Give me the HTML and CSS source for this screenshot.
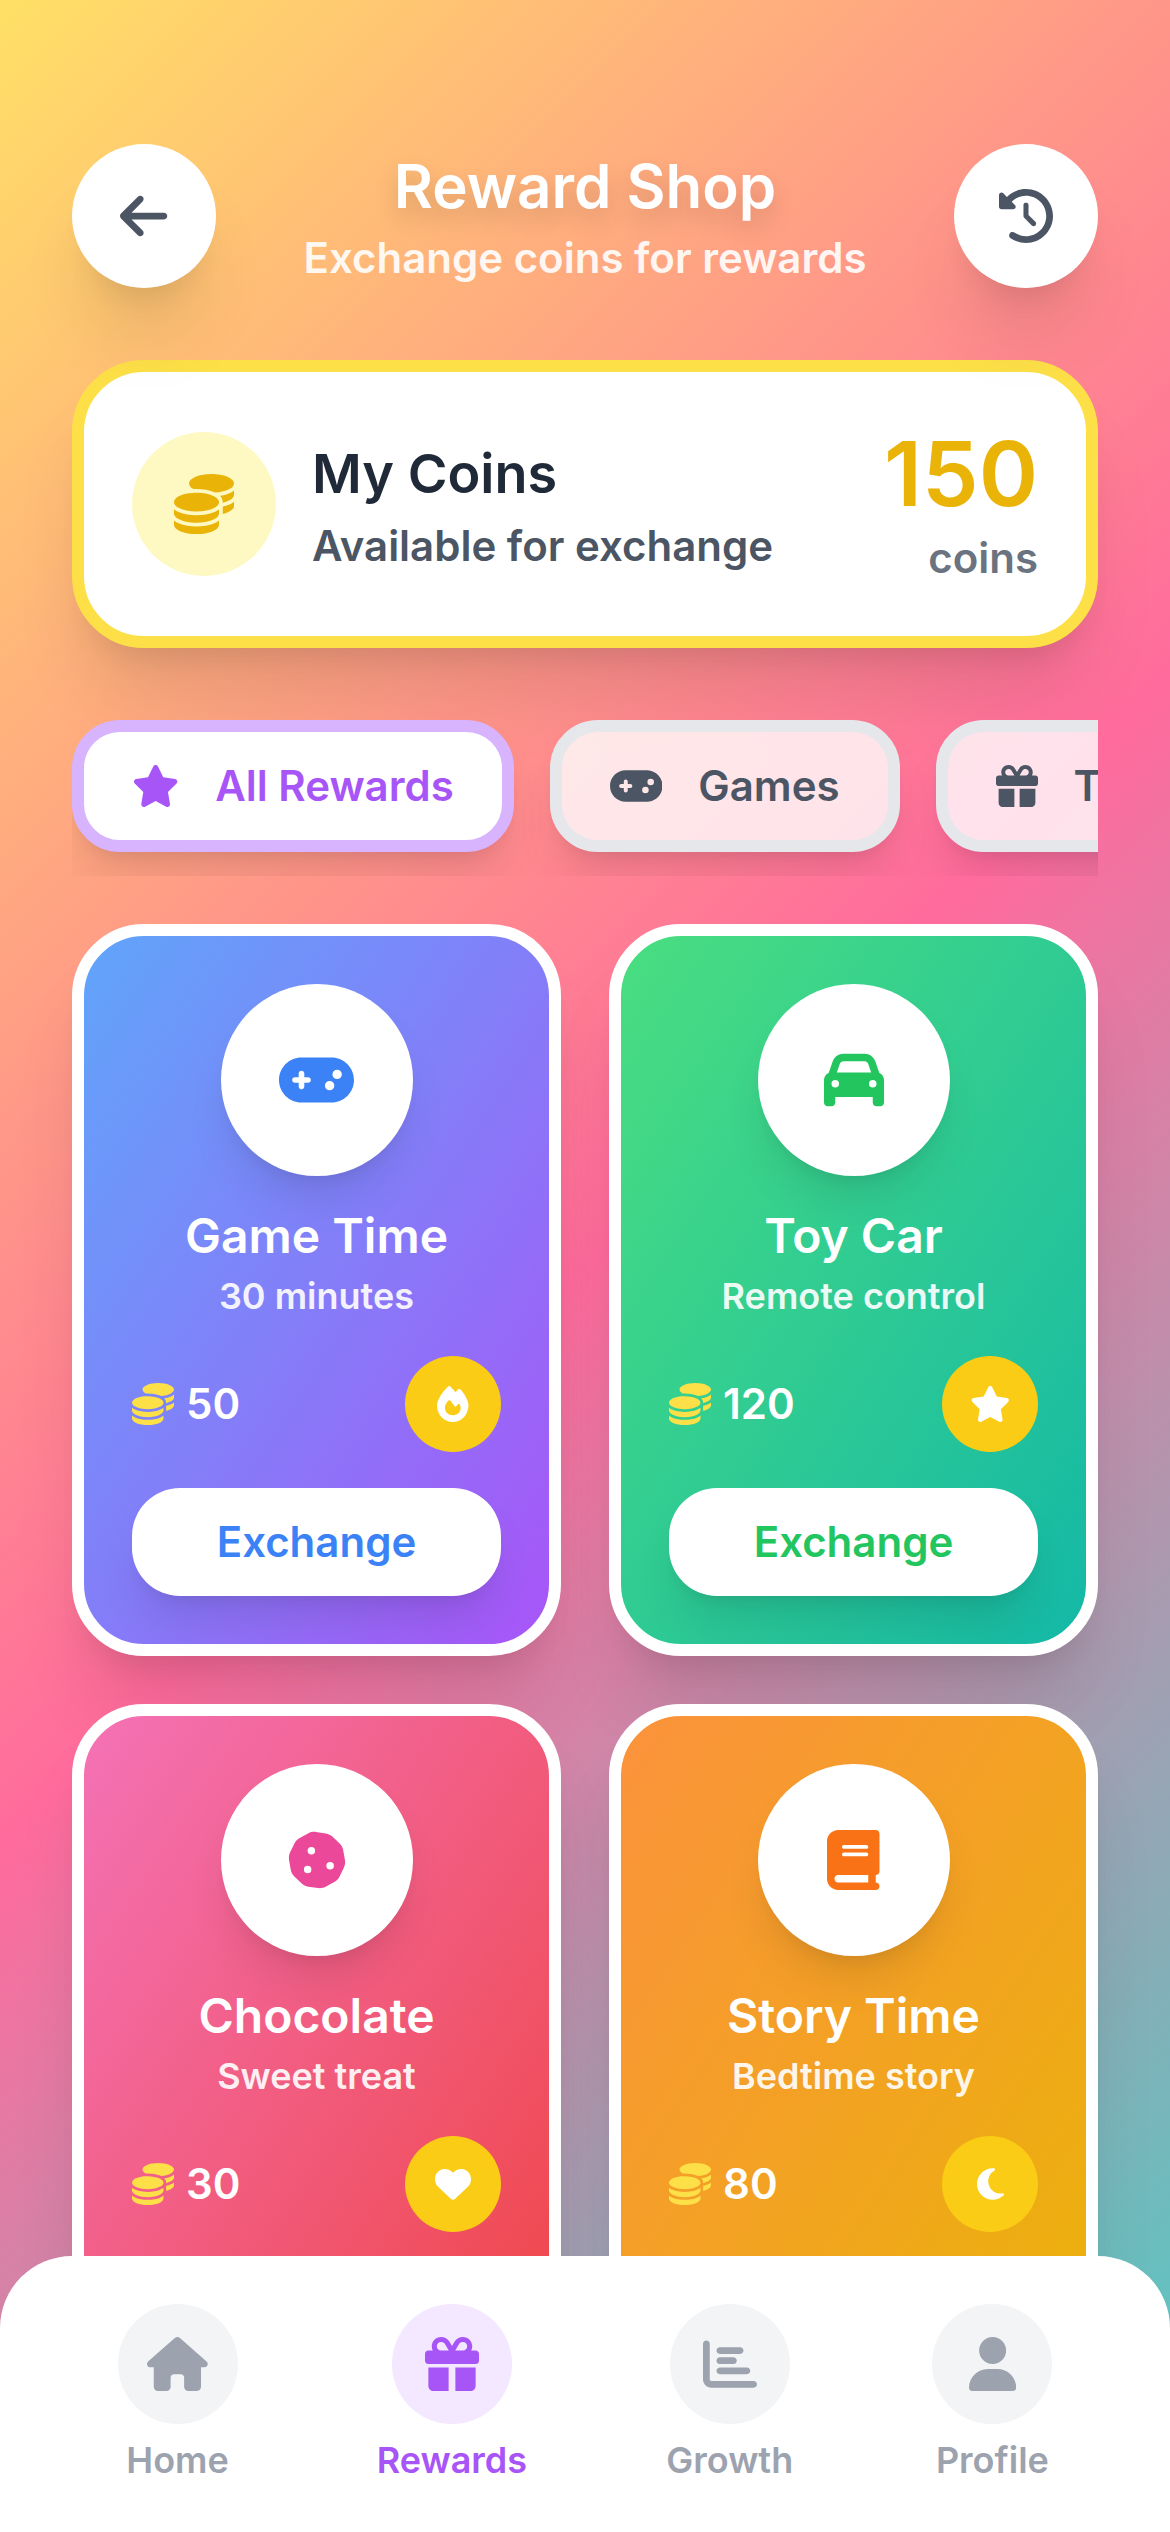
FILE: index.html
```html
<!DOCTYPE html>
<html lang="en">
<head>
<meta charset="utf-8">
<meta name="viewport" content="width=device-width, initial-scale=1">
<title>Reward Shop</title>
<link rel="stylesheet" href="styles.css">
</head>
<body>
<svg class="sprite" aria-hidden="true">
  <symbol id="coins" viewBox="0 0 512 512"><path d="M512 80c0 18-14.3 34.6-38.4 48c-29.1 16.1-72.5 27.5-122.3 30.9c-3.7-1.8-7.4-3.5-11.3-5C300.6 137.4 248.2 128 192 128c-8.3 0-16.4 .2-24.5 .6l-1.1-.6C142.3 114.6 128 98 128 80c0-44.2 86-80 192-80S512 35.8 512 80zM160.7 161.1c10.2-.7 20.7-1.1 31.3-1.1c62.2 0 117.4 12.3 152.5 31.4C369.3 204.9 384 221.7 384 240c0 4-.7 7.9-2.1 11.7c-4.6 13.2-17 25.3-35 35.5l-1.3 .7c-35 19.4-90.8 32-153.6 32c-59.6 0-112.9-11.3-148.2-29.1c-1.9-.9-3.7-1.9-5.5-2.9C14.3 274.6 0 258 0 240c0-34.8 53.4-64.5 128-75.4c10.5-1.5 21.4-2.7 32.7-3.5zM416 240c0-21.9-10.6-39.9-24.1-53.4c28.3-4.4 54.2-11.4 76.2-20.5c16.3-6.8 31.5-15.2 43.9-25.5l0 35.4c0 19.3-16.5 37.1-43.8 50.9c-14.6 7.4-32.4 13.7-52.4 18.5c.1-1.8 .2-3.5 .2-5.3zm-32 96c0 18-14.3 34.6-38.4 48c-1.8 1-3.6 1.9-5.5 2.9C304.9 404.7 251.6 416 192 416c-62.8 0-118.6-12.6-153.6-32C14.3 370.6 0 354 0 336l0-35.4c12.5 10.3 27.6 18.7 43.9 25.5C83.4 342.6 135.8 352 192 352s108.6-9.4 148.1-25.9c7.8-3.2 15.3-6.9 22.4-10.9c6.1-3.4 11.8-7.2 17.2-11.2c1.5-1.1 2.9-2.3 4.3-3.4l0 3.4 0 5.7 0 26.3zm32 0l0-32 0-25.9c19-4.2 36.5-9.5 52.1-16c16.3-6.8 31.5-15.2 43.9-25.5l0 35.4c0 10.5-5 21-14.9 30.9c-16.3 16.3-45 29.7-81.3 38.4c.1-1.7 .2-3.5 .2-5.3zM192 448c56.2 0 108.6-9.4 148.1-25.9c16.3-6.8 31.5-15.2 43.9-25.5l0 35.4c0 44.2-86 80-192 80S0 476.2 0 432l0-35.4c12.5 10.3 27.6 18.7 43.9 25.5C83.4 438.6 135.8 448 192 448z"/></symbol>
  <symbol id="star" viewBox="0 0 576 512"><path d="M316.9 18C311.6 7 300.4 0 288.1 0s-23.4 7-28.8 18L195 150.3 51.4 171.5c-12 1.8-22 10.2-25.7 21.7s-.7 24.2 7.9 32.7L137.8 329 113.2 474.7c-2 12 3 24.2 12.9 31.3s23 8 33.8 2.3l128.3-68.5 128.3 68.5c10.8 5.7 23.9 4.9 33.8-2.3s14.9-19.3 12.9-31.3L438.5 329 542.7 225.9c8.6-8.5 11.7-21.2 7.9-32.7s-13.7-19.9-25.7-21.7L381.2 150.3 316.9 18z"/></symbol>
  <symbol id="gamepad" viewBox="0 0 640 512"><path d="M192 64C86 64 0 150 0 256S86 448 192 448l256 0c106 0 192-86 192-192s-86-192-192-192L192 64zM496 168a40 40 0 1 1 0 80 40 40 0 1 1 0-80zM392 304a40 40 0 1 1 80 0 40 40 0 1 1 -80 0zM168 200c0-13.3 10.7-24 24-24s24 10.7 24 24l0 32 32 0c13.3 0 24 10.7 24 24s-10.7 24-24 24l-32 0 0 32c0 13.3-10.7 24-24 24s-24-10.7-24-24l0-32-32 0c-13.3 0-24-10.7-24-24s10.7-24 24-24l32 0 0-32z"/></symbol>
  <symbol id="gift" viewBox="0 0 512 512"><path d="M190.5 68.8L225.3 128l-1.3 0-72 0c-22.1 0-40-17.9-40-40s17.9-40 40-40l2.2 0c14.9 0 28.8 7.9 36.3 20.8zM64 88c0 14.4 3.5 28 9.6 40L32 128c-17.7 0-32 14.3-32 32l0 64c0 17.7 14.3 32 32 32l448 0c17.7 0 32-14.3 32-32l0-64c0-17.7-14.3-32-32-32l-41.6 0c6.1-12 9.6-25.6 9.6-40c0-48.6-39.4-88-88-88l-2.2 0c-31.9 0-61.5 16.9-77.7 44.4L256 85.5l-24.1-41C215.7 16.9 186.1 0 154.2 0L152 0C103.4 0 64 39.4 64 88zm336 0c0 22.1-17.9 40-40 40l-72 0-1.3 0 34.8-59.2C329.1 55.9 342.9 48 357.8 48l2.2 0c22.1 0 40 17.9 40 40zM32 288l0 176c0 26.5 21.5 48 48 48l144 0 0-224L32 288zM288 512l144 0c26.5 0 48-21.5 48-48l0-176-192 0 0 224z"/></symbol>
</svg>

<div class="app">
  <main class="screen">
    <header class="header">
      <button class="round-button" type="button" aria-label="Back">
        <svg class="icon icon-54" viewBox="0 0 448 512"><path d="M9.4 233.4c-12.5 12.5-12.5 32.8 0 45.3l160 160c12.5 12.5 32.8 12.5 45.3 0s12.5-32.8 0-45.3L109.2 288 416 288c17.7 0 32-14.3 32-32s-14.3-32-32-32l-306.7 0L214.6 118.6c12.5-12.5 12.5-32.8 0-45.3s-32.8-12.5-45.3 0l-160 160z"/></svg>
      </button>
      <div class="heading">
        <h1 class="heading-title">Reward Shop</h1>
        <p class="heading-subtitle">Exchange coins for rewards</p>
      </div>
      <button class="round-button" type="button" aria-label="History">
        <svg class="icon icon-54" viewBox="0 0 512 512"><path d="M75 75L41 41C25.9 25.9 0 36.6 0 57.9L0 168c0 13.3 10.7 24 24 24l110.1 0c21.4 0 32.1-25.9 17-41l-30.8-30.8C155 85.5 203 64 256 64c106 0 192 86 192 192s-86 192-192 192c-40.8 0-78.6-12.7-109.7-34.4c-14.5-10.1-34.4-6.6-44.6 7.9s-6.6 34.4 7.9 44.6C151.2 495 201.7 512 256 512c141.4 0 256-114.6 256-256S397.4 0 256 0C185.3 0 121.3 28.7 75 75zm181 53c-13.3 0-24 10.7-24 24l0 104c0 6.4 2.5 12.5 7 17l72 72c9.4 9.4 24.6 9.4 33.9 0s9.4-24.6 0-33.9l-65-65 0-94.1c0-13.3-10.7-24-24-24z"/></svg>
      </button>
    </header>

    <section class="balance">
      <span class="balance-icon"><svg class="icon icon-60" viewBox="0 0 512 512"><use href="#coins"/></svg></span>
      <div class="balance-text">
        <h2 class="balance-title">My Coins</h2>
        <p class="balance-note">Available for exchange</p>
      </div>
      <div class="balance-amount">
        <p class="balance-number">150</p>
        <p class="balance-unit">coins</p>
      </div>
    </section>

    <div class="tabs">
      <button class="tab tab-active" type="button"><svg class="icon icon-42" viewBox="0 0 576 512"><use href="#star"/></svg>All Rewards</button>
      <button class="tab" type="button"><svg class="icon icon-42" viewBox="0 0 640 512"><use href="#gamepad"/></svg>Games</button>
      <button class="tab" type="button"><svg class="icon icon-42" viewBox="0 0 512 512"><use href="#gift"/></svg>Toys</button>
    </div>

    <section class="rewards">
      <article class="card card-game">
        <span class="card-icon"><svg class="icon icon-60" viewBox="0 0 640 512"><use href="#gamepad"/></svg></span>
        <h3 class="card-title">Game Time</h3>
        <p class="card-note">30 minutes</p>
        <div class="card-row">
          <span class="price"><svg class="icon icon-42" viewBox="0 0 512 512"><use href="#coins"/></svg><span class="price-value">50</span></span>
          <span class="badge"><svg class="icon icon-36" viewBox="0 0 448 512"><path d="M159.3 5.4c7.8-7.3 19.9-7.2 27.7 .1c27.6 25.9 53.5 53.8 77.7 84c11-14.4 23.5-30.1 37-42.9c7.9-7.4 20.1-7.4 28 .1c34.6 33 63.9 76.6 84.5 118c20.3 40.8 33.8 82.5 33.8 111.9C448 404.2 348.2 512 224 512C98.4 512 0 404.1 0 276.5c0-38.4 17.8-85.3 45.4-131.7C73.3 97.7 112.7 48.6 159.3 5.4zM225.7 416c25.3 0 47.7-7 68.8-21c42.1-29.4 53.4-88.2 28.1-134.4c-4.5-9-16-9.6-22.5-2l-25.2 29.3c-6.6 7.6-18.5 7.4-24.7-.5c-16.5-21-46-58.5-62.8-79.8c-6.3-8-18.3-8.1-24.7-.1c-33.8 42.5-50.8 69.3-50.8 99.4C112 375.4 162.6 416 225.7 416z"/></svg></span>
        </div>
        <button class="exchange" type="button">Exchange</button>
      </article>

      <article class="card card-car">
        <span class="card-icon"><svg class="icon icon-60" viewBox="0 0 512 512"><path d="M135.2 117.4L109.1 192l293.8 0-26.1-74.6C372.3 104.6 360.2 96 346.6 96L165.4 96c-13.6 0-25.7 8.6-30.2 21.4zM39.6 196.8L74.8 96.3C88.3 57.8 124.6 32 165.4 32l181.2 0c40.8 0 77.1 25.8 90.6 64.3l35.2 100.5c23.2 9.6 39.6 32.5 39.6 59.2l0 144 0 48c0 17.7-14.3 32-32 32l-32 0c-17.7 0-32-14.3-32-32l0-48L96 400l0 48c0 17.7-14.3 32-32 32l-32 0c-17.7 0-32-14.3-32-32l0-48L0 256c0-26.7 16.4-49.6 39.6-59.2zM128 288a32 32 0 1 0 -64 0 32 32 0 1 0 64 0zm288 32a32 32 0 1 0 0-64 32 32 0 1 0 0 64z"/></svg></span>
        <h3 class="card-title">Toy Car</h3>
        <p class="card-note">Remote control</p>
        <div class="card-row">
          <span class="price"><svg class="icon icon-42" viewBox="0 0 512 512"><use href="#coins"/></svg><span class="price-value">120</span></span>
          <span class="badge"><svg class="icon icon-36" viewBox="0 0 576 512"><use href="#star"/></svg></span>
        </div>
        <button class="exchange" type="button">Exchange</button>
      </article>

      <article class="card card-sweet">
        <span class="card-icon"><svg class="icon icon-60" viewBox="0 0 512 512"><path d="M247.2 17c-22.1-3.1-44.6 .9-64.4 11.4l-74 39.5C89.1 78.4 73.2 94.9 63.4 115L26.7 190.6c-9.8 20.1-13 42.9-9.1 64.9l14.5 82.8c3.9 22.1 14.6 42.3 30.7 57.9l60.3 58.4c16.1 15.6 36.6 25.6 58.7 28.7l83 11.7c22.1 3.1 44.6-.9 64.4-11.4l74-39.5c19.7-10.5 35.6-27 45.4-47.2l36.7-75.5c9.8-20.1 13-42.9 9.1-64.9l-14.6-82.8c-3.9-22.1-14.6-42.3-30.7-57.9L388.9 57.5c-16.1-15.6-36.6-25.6-58.7-28.7L247.2 17zM208 144a32 32 0 1 1 0 64 32 32 0 1 1 0-64zM144 336a32 32 0 1 1 64 0 32 32 0 1 1 -64 0zm224-64a32 32 0 1 1 0 64 32 32 0 1 1 0-64z"/></svg></span>
        <h3 class="card-title">Chocolate</h3>
        <p class="card-note">Sweet treat</p>
        <div class="card-row">
          <span class="price"><svg class="icon icon-42" viewBox="0 0 512 512"><use href="#coins"/></svg><span class="price-value">30</span></span>
          <span class="badge"><svg class="icon icon-36" viewBox="0 0 512 512"><path d="M47.6 300.4L228.3 469.1c7.5 7 17.4 10.9 27.7 10.9s20.2-3.9 27.7-10.9L464.4 300.4c30.4-28.3 47.6-68 47.6-109.5v-5.8c0-69.9-50.5-129.5-119.4-141C347 36.5 300.6 51.4 268 84L256 96 244 84c-32.6-32.6-79-47.5-124.6-39.9C50.5 55.6 0 115.2 0 185.1v5.8c0 41.5 17.2 81.2 47.6 109.5z"/></svg></span>
        </div>
        <button class="exchange" type="button">Exchange</button>
      </article>

      <article class="card card-story">
        <span class="card-icon"><svg class="icon icon-60" viewBox="0 0 448 512"><path d="M96 0C43 0 0 43 0 96L0 416c0 53 43 96 96 96l288 0 32 0c17.7 0 32-14.3 32-32s-14.3-32-32-32l0-64c17.7 0 32-14.3 32-32l0-320c0-17.7-14.3-32-32-32L384 0 96 0zm0 384l256 0 0 64L96 448c-17.7 0-32-14.3-32-32s14.3-32 32-32zm32-240c0-8.8 7.2-16 16-16l192 0c8.8 0 16 7.2 16 16s-7.2 16-16 16l-192 0c-8.8 0-16-7.2-16-16zm16 48l192 0c8.8 0 16 7.2 16 16s-7.2 16-16 16l-192 0c-8.8 0-16-7.2-16-16s7.2-16 16-16z"/></svg></span>
        <h3 class="card-title">Story Time</h3>
        <p class="card-note">Bedtime story</p>
        <div class="card-row">
          <span class="price"><svg class="icon icon-42" viewBox="0 0 512 512"><use href="#coins"/></svg><span class="price-value">80</span></span>
          <span class="badge"><svg class="icon icon-36" viewBox="0 0 384 512"><path d="M223.5 32C100 32 0 132.3 0 256S100 480 223.5 480c60.6 0 115.5-24.2 155.8-63.4c5-4.9 6.3-12.5 3.1-18.7s-10.1-9.7-17-8.5c-9.8 1.7-19.8 2.6-30.1 2.6c-96.9 0-175.5-78.8-175.5-176c0-65.8 36-123.1 89.3-153.3c6.1-3.5 9.2-10.5 7.7-17.3s-7.3-11.9-14.3-12.5c-6.3-.5-12.6-.8-19-.8z"/></svg></span>
        </div>
        <button class="exchange" type="button">Exchange</button>
      </article>
    </section>
  </main>

  <nav class="nav">
    <a class="nav-item" href="#home">
      <span class="nav-icon"><svg class="icon icon-54" viewBox="0 0 576 512"><path d="M575.8 255.5c0 18-15 32.1-32 32.1l-32 0 .7 160.2c0 2.7-.2 5.4-.5 8.1l0 16.2c0 22.1-17.9 40-40 40l-16 0c-1.1 0-2.2 0-3.3-.1c-1.4 .1-2.8 .1-4.2 .1L416 512l-24 0c-22.1 0-40-17.9-40-40l0-24 0-64c0-17.7-14.3-32-32-32l-64 0c-17.7 0-32 14.3-32 32l0 64 0 24c0 22.1-17.9 40-40 40l-24 0-31.9 0c-1.5 0-3-.1-4.5-.2c-1.2 .1-2.4 .2-3.6 .2l-16 0c-22.1 0-40-17.9-40-40l0-112c0-.9 0-1.9 .1-2.8l0-69.7-32 0c-18 0-32-14-32-32.1c0-9 3-17 10-24L266.4 8c7-7 15-8 22-8s15 2 21 7L564.8 231.5c8 7 12 15 11 24z"/></svg></span>
      Home
    </a>
    <a class="nav-item nav-item-active" href="#rewards" aria-current="page">
      <span class="nav-icon"><svg class="icon icon-54" viewBox="0 0 512 512"><use href="#gift"/></svg></span>
      Rewards
    </a>
    <a class="nav-item" href="#growth">
      <span class="nav-icon"><svg class="icon icon-54" viewBox="0 0 512 512"><path d="M32 32c17.7 0 32 14.3 32 32l0 336c0 8.8 7.2 16 16 16l400 0c17.7 0 32 14.3 32 32s-14.3 32-32 32L80 480c-44.2 0-80-35.8-80-80L0 64C0 46.3 14.3 32 32 32zm96 96c0-17.7 14.3-32 32-32l192 0c17.7 0 32 14.3 32 32s-14.3 32-32 32l-192 0c-17.7 0-32-14.3-32-32zm32 64l128 0c17.7 0 32 14.3 32 32s-14.3 32-32 32l-128 0c-17.7 0-32-14.3-32-32s14.3-32 32-32zm0 96l256 0c17.7 0 32 14.3 32 32s-14.3 32-32 32l-256 0c-17.7 0-32-14.3-32-32s14.3-32 32-32z"/></svg></span>
      Growth
    </a>
    <a class="nav-item" href="#profile">
      <span class="nav-icon"><svg class="icon icon-54" viewBox="0 0 448 512"><path d="M224 256A128 128 0 1 0 224 0a128 128 0 1 0 0 256zm-45.7 48C79.8 304 0 383.8 0 482.3C0 498.7 13.3 512 29.7 512l388.6 0c16.4 0 29.7-13.3 29.7-29.7C448 383.8 368.2 304 269.7 304l-91.4 0z"/></svg></span>
      Profile
    </a>
  </nav>
</div>
</body>
</html>
```
FILE: styles.css
```css
*,
*::before,
*::after {
  box-sizing: border-box;
}

:root {
  --shadow-small: 0 30px 45px -9px rgba(0, 0, 0, 0.1), 0 12px 18px -12px rgba(0, 0, 0, 0.1);
  --shadow-large: 0 60px 75px -15px rgba(0, 0, 0, 0.1), 0 24px 30px -18px rgba(0, 0, 0, 0.1);
}

body,
h1,
h2,
h3,
p {
  margin: 0;
}

body {
  font-family: Inter, "Liberation Sans", sans-serif;
  font-size: 42px;
  line-height: 60px;
  font-weight: 600;
}

h1,
h2,
h3 {
  font-weight: 600;
}

button {
  margin: 0;
  padding: 0;
  border: 0;
  font: inherit;
  cursor: pointer;
}

.sprite {
  display: none;
}

.icon {
  display: block;
  flex: none;
  width: auto;
  fill: currentColor;
}

.icon-36 { height: 36px; }
.icon-42 { height: 42px; }
.icon-54 { height: 54px; }
.icon-60 { height: 60px; }

.app {
  height: 100vh;
  overflow: hidden auto;
  scrollbar-width: none;
  background: linear-gradient(135deg, #ffe066 0%, #ff6b9d 50%, #4ecdc4 100%);
}

.screen {
  padding: 144px 72px 324px;
}

/* Header */

.header {
  display: flex;
  align-items: center;
  justify-content: space-between;
  margin-bottom: 72px;
}

.round-button {
  display: grid;
  place-items: center;
  width: 144px;
  height: 144px;
  border-radius: 50%;
  background: #fff;
  color: #4b5563;
  box-shadow: var(--shadow-large);
}

.heading {
  text-align: center;
  color: #fff;
}

.heading-title {
  font-size: 60px;
  line-height: 84px;
  text-shadow: 0 12px 24px rgba(0, 0, 0, 0.15);
}

.heading-subtitle {
  opacity: 0.9;
}

/* Coin balance */

.balance {
  display: flex;
  align-items: center;
  gap: 36px;
  margin-bottom: 72px;
  padding: 48px;
  border: 12px solid #fde047;
  border-radius: 72px;
  background: #fff;
  box-shadow: var(--shadow-large);
}

.balance-icon {
  display: grid;
  place-items: center;
  width: 144px;
  height: 144px;
  border-radius: 50%;
  background: #fef9c3;
  color: #eab308;
}

.balance-text {
  flex: 1;
}

.balance-title {
  font-size: 54px;
  line-height: 84px;
  color: #1f2937;
}

.balance-note {
  color: #4b5563;
}

.balance-amount {
  text-align: right;
}

.balance-number {
  font-size: 90px;
  line-height: 108px;
  color: #eab308;
}

.balance-unit {
  color: #6b7280;
}

/* Category tabs */

.tabs {
  display: flex;
  gap: 36px;
  margin-bottom: 48px;
  padding-bottom: 24px;
  overflow: auto hidden;
  scrollbar-width: none;
}

.tab {
  display: flex;
  flex: none;
  align-items: center;
  gap: 36px;
  padding: 24px 48px;
  border: 12px solid #e5e7eb;
  border-radius: 48px;
  background: rgba(255, 255, 255, 0.8);
  color: #4b5563;
  box-shadow: var(--shadow-small);
}

.tab-active {
  border-color: #d8b4fe;
  background: #fff;
  color: #a855f7;
}

/* Reward cards */

.rewards {
  display: grid;
  grid-template-columns: 1fr 1fr;
  gap: 48px;
}

.card {
  display: flex;
  flex-direction: column;
  align-items: center;
  padding: 48px;
  border: 12px solid #fff;
  border-radius: 72px;
  color: #fff;
  text-align: center;
  box-shadow: var(--shadow-large);
}

.card-game {
  --accent: #3b82f6;
  background: linear-gradient(to bottom right, #60a5fa, #a855f7);
}

.card-car {
  --accent: #22c55e;
  background: linear-gradient(to bottom right, #4ade80, #14b8a6);
}

.card-sweet {
  --accent: #ec4899;
  background: linear-gradient(to bottom right, #f472b6, #ef4444);
}

.card-story {
  --accent: #f97316;
  background: linear-gradient(to bottom right, #fb923c, #eab308);
}

.card-icon {
  display: grid;
  place-items: center;
  width: 192px;
  height: 192px;
  margin-bottom: 24px;
  border-radius: 50%;
  background: #fff;
  color: var(--accent);
  box-shadow: var(--shadow-small);
}

.card-title {
  font-size: 48px;
  line-height: 72px;
}

.card-note {
  font-size: 36px;
  line-height: 48px;
  opacity: 0.9;
}

.card-row {
  display: flex;
  align-items: center;
  justify-content: space-between;
  align-self: stretch;
  margin: 36px 0;
}

.price {
  display: flex;
  align-items: center;
  gap: 12px;
  color: #fde047;
}

.price-value {
  color: #fff;
}

.badge {
  display: grid;
  place-items: center;
  width: 96px;
  height: 96px;
  border-radius: 50%;
  background: #facc15;
}

.exchange {
  align-self: stretch;
  padding: 24px;
  border-radius: 48px;
  background: #fff;
  color: var(--accent);
  box-shadow: var(--shadow-small);
}

/* Bottom navigation */

.nav {
  position: fixed;
  right: 0;
  bottom: 0;
  left: 0;
  display: flex;
  justify-content: space-around;
  padding: 48px;
  border-radius: 72px 72px 0 0;
  background: #fff;
}

.nav-item {
  display: flex;
  flex-direction: column;
  align-items: center;
  gap: 12px;
  color: #9ca3af;
  font-size: 36px;
  line-height: 48px;
  text-decoration: none;
}

.nav-item-active {
  color: #a855f7;
}

.nav-icon {
  display: grid;
  place-items: center;
  width: 120px;
  height: 120px;
  border-radius: 50%;
  background: #f3f4f6;
}

.nav-item-active .nav-icon {
  background: #f3e8ff;
}
```
